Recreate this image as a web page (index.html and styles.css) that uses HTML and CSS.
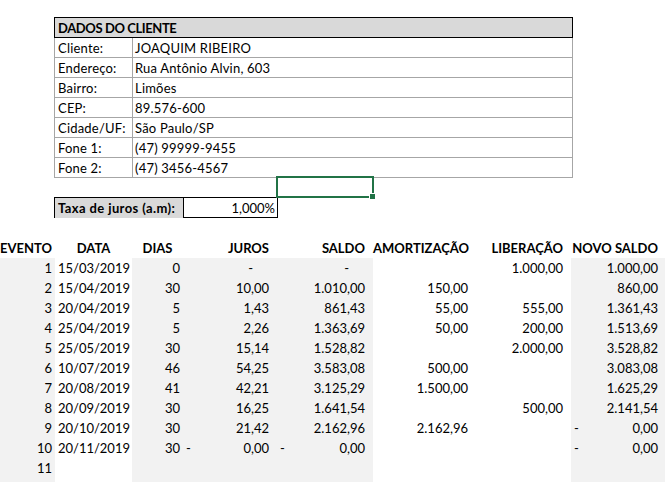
FILE: index.html
```html
<!DOCTYPE html>
<html lang="pt-BR">
<head>
<meta charset="utf-8">
<title>Planilha de empréstimo</title>
<link rel="stylesheet" href="styles.css">
</head>
<body>
<div class="sheet">
  <section class="client">
    <div class="client-head">DADOS DO CLIENTE</div>
    <div class="client-row"><div class="lbl">Cliente:</div><div class="val">JOAQUIM RIBEIRO</div></div>
    <div class="client-row"><div class="lbl">Endereço:</div><div class="val">Rua Antônio Alvin, 603</div></div>
    <div class="client-row"><div class="lbl">Bairro:</div><div class="val">Limões</div></div>
    <div class="client-row"><div class="lbl">CEP:</div><div class="val">89.576-600</div></div>
    <div class="client-row"><div class="lbl">Cidade/UF:</div><div class="val">São Paulo/SP</div></div>
    <div class="client-row"><div class="lbl">Fone 1:</div><div class="val">(47) 99999-9455</div></div>
    <div class="client-row"><div class="lbl">Fone 2:</div><div class="val">(47) 3456-4567</div></div>
  </section>

  <div class="rate">
    <div class="rate-lbl">Taxa de juros (a.m):</div>
    <div class="rate-val">1,000%</div>
  </div>

  <div class="ledger">
    <div class="lrow head">
      <div class="c ca">EVENTO</div>
      <div class="c cb center">DATA</div>
      <div class="c cc center">DIAS</div>
      <div class="c cd">JUROS</div>
      <div class="c ce">SALDO</div>
      <div class="c cf">AMORTIZAÇÃO</div>
      <div class="c cg">LIBERAÇÃO</div>
      <div class="c ch">NOVO SALDO</div>
    </div>
    <div class="lrow">
      <div class="c ca">1</div><div class="c cb">15/03/2019</div><div class="c cc">0</div>
      <div class="c cd"><span class="zero">-</span></div><div class="c ce"><span class="zero">-</span></div>
      <div class="c cf"></div><div class="c cg">1.000,00</div><div class="c ch">1.000,00</div>
    </div>
    <div class="lrow">
      <div class="c ca">2</div><div class="c cb">15/04/2019</div><div class="c cc">30</div>
      <div class="c cd">10,00</div><div class="c ce">1.010,00</div>
      <div class="c cf">150,00</div><div class="c cg"></div><div class="c ch">860,00</div>
    </div>
    <div class="lrow">
      <div class="c ca">3</div><div class="c cb">20/04/2019</div><div class="c cc">5</div>
      <div class="c cd">1,43</div><div class="c ce">861,43</div>
      <div class="c cf">55,00</div><div class="c cg">555,00</div><div class="c ch">1.361,43</div>
    </div>
    <div class="lrow">
      <div class="c ca">4</div><div class="c cb">25/04/2019</div><div class="c cc">5</div>
      <div class="c cd">2,26</div><div class="c ce">1.363,69</div>
      <div class="c cf">50,00</div><div class="c cg">200,00</div><div class="c ch">1.513,69</div>
    </div>
    <div class="lrow">
      <div class="c ca">5</div><div class="c cb">25/05/2019</div><div class="c cc">30</div>
      <div class="c cd">15,14</div><div class="c ce">1.528,82</div>
      <div class="c cf"></div><div class="c cg">2.000,00</div><div class="c ch">3.528,82</div>
    </div>
    <div class="lrow">
      <div class="c ca">6</div><div class="c cb">10/07/2019</div><div class="c cc">46</div>
      <div class="c cd">54,25</div><div class="c ce">3.583,08</div>
      <div class="c cf">500,00</div><div class="c cg"></div><div class="c ch">3.083,08</div>
    </div>
    <div class="lrow">
      <div class="c ca">7</div><div class="c cb">20/08/2019</div><div class="c cc">41</div>
      <div class="c cd">42,21</div><div class="c ce">3.125,29</div>
      <div class="c cf">1.500,00</div><div class="c cg"></div><div class="c ch">1.625,29</div>
    </div>
    <div class="lrow">
      <div class="c ca">8</div><div class="c cb">20/09/2019</div><div class="c cc">30</div>
      <div class="c cd">16,25</div><div class="c ce">1.641,54</div>
      <div class="c cf"></div><div class="c cg">500,00</div><div class="c ch">2.141,54</div>
    </div>
    <div class="lrow">
      <div class="c ca">9</div><div class="c cb">20/10/2019</div><div class="c cc">30</div>
      <div class="c cd">21,42</div><div class="c ce">2.162,96</div>
      <div class="c cf">2.162,96</div><div class="c cg"></div><div class="c ch neg"><span>-</span><span>0,00</span></div>
    </div>
    <div class="lrow">
      <div class="c ca">10</div><div class="c cb">20/11/2019</div><div class="c cc">30</div>
      <div class="c cd neg"><span>-</span><span>0,00</span></div><div class="c ce neg"><span>-</span><span>0,00</span></div>
      <div class="c cf"></div><div class="c cg"></div><div class="c ch neg"><span>-</span><span>0,00</span></div>
    </div>
    <div class="lrow">
      <div class="c ca">11</div><div class="c cb"></div><div class="c cc"></div>
      <div class="c cd"></div><div class="c ce"></div>
      <div class="c cf"></div><div class="c cg"></div><div class="c ch"></div>
    </div>
    <div class="lrow">
      <div class="c ca"></div><div class="c cb"></div><div class="c cc"></div>
      <div class="c cd"></div><div class="c ce"></div>
      <div class="c cf"></div><div class="c cg"></div><div class="c ch"></div>
    </div>
  </div>

  <div class="selection"><span class="handle"></span></div>
</div>
</body>
</html>
```

FILE: styles.css
```css
* { box-sizing: border-box; }

html, body {
  margin: 0;
  padding: 0;
  background: #ffffff;
  overflow: hidden;
}

body {
  font-family: "Lato", "Open Sans", sans-serif;
  font-size: 13px;
  color: #000000;
  width: 671px;
  height: 482px;
}

.sheet {
  position: relative;
  padding-top: 17px;
}

/* ---------- Client data block ---------- */
.client {
  margin-left: 54px;
  width: 519px;
}

.client-head {
  height: 21px;
  border: 1px solid #000000;
  background: #d9d9d9;
  font-weight: bold;
  letter-spacing: -0.4px;
  line-height: 19px;
  padding: 1px 0 0 3px;
}

.client-row {
  display: grid;
  grid-template-columns: 78px 1fr;
  height: 20px;
  border-left: 1px solid #a6a6a6;
  border-right: 1px solid #a6a6a6;
  border-bottom: 1px solid #a6a6a6;
  line-height: 19px;
  letter-spacing: 0.2px;
}

.client-row .lbl {
  border-right: 1px solid #a6a6a6;
  padding: 1px 0 0 3px;
}

.client-row .val {
  padding: 1px 0 0 2px;
}

/* ---------- Rate box ---------- */
.rate {
  margin: 19px 0 0 54px;
  width: 224px;
  height: 21px;
  border: 1px solid #000000;
  display: grid;
  grid-template-columns: 129px 1fr;
  line-height: 19px;
}

.rate-lbl {
  background: #d9d9d9;
  border-right: 1px solid #000000;
  font-weight: bold;
  letter-spacing: 0.4px;
  padding: 1px 0 0 3px;
}

.rate-val {
  text-align: right;
  padding: 1px 2px 0 0;
}

/* ---------- Ledger ---------- */
.ledger {
  margin-top: 20px;
}

.lrow {
  display: grid;
  grid-template-columns: 55px 77px 51px 94px 96px 103px 95px 94px;
  height: 20px;
  line-height: 20px;
}

.c {
  text-align: right;
  padding-right: 8px;
  white-space: nowrap;
}

.ca { padding-right: 3px; }
.cb { padding-right: 2px; }
.cc { padding-right: 3px; }
.ch { padding-right: 7px; }

.lrow:not(.head) .ca,
.lrow:not(.head) .cc,
.lrow:not(.head) .cd,
.lrow:not(.head) .ce,
.lrow:not(.head) .ch {
  background: #f2f2f2;
}

.head .c {
  font-weight: bold;
}

.head .ca { padding-right: 3px; }

.head .center {
  text-align: center;
  padding: 0;
}

.zero {
  margin-right: 16px;
}

.neg {
  display: flex;
  justify-content: space-between;
  padding-left: 3px;
}

/* ---------- Active cell selection ---------- */
.selection {
  position: absolute;
  left: 276px;
  top: 176px;
  width: 98px;
  height: 22px;
  border: 2px solid #217346;
}

.handle {
  position: absolute;
  right: -4px;
  bottom: -4px;
  width: 7px;
  height: 7px;
  background: #217346;
  border: 1px solid #ffffff;
}
```
